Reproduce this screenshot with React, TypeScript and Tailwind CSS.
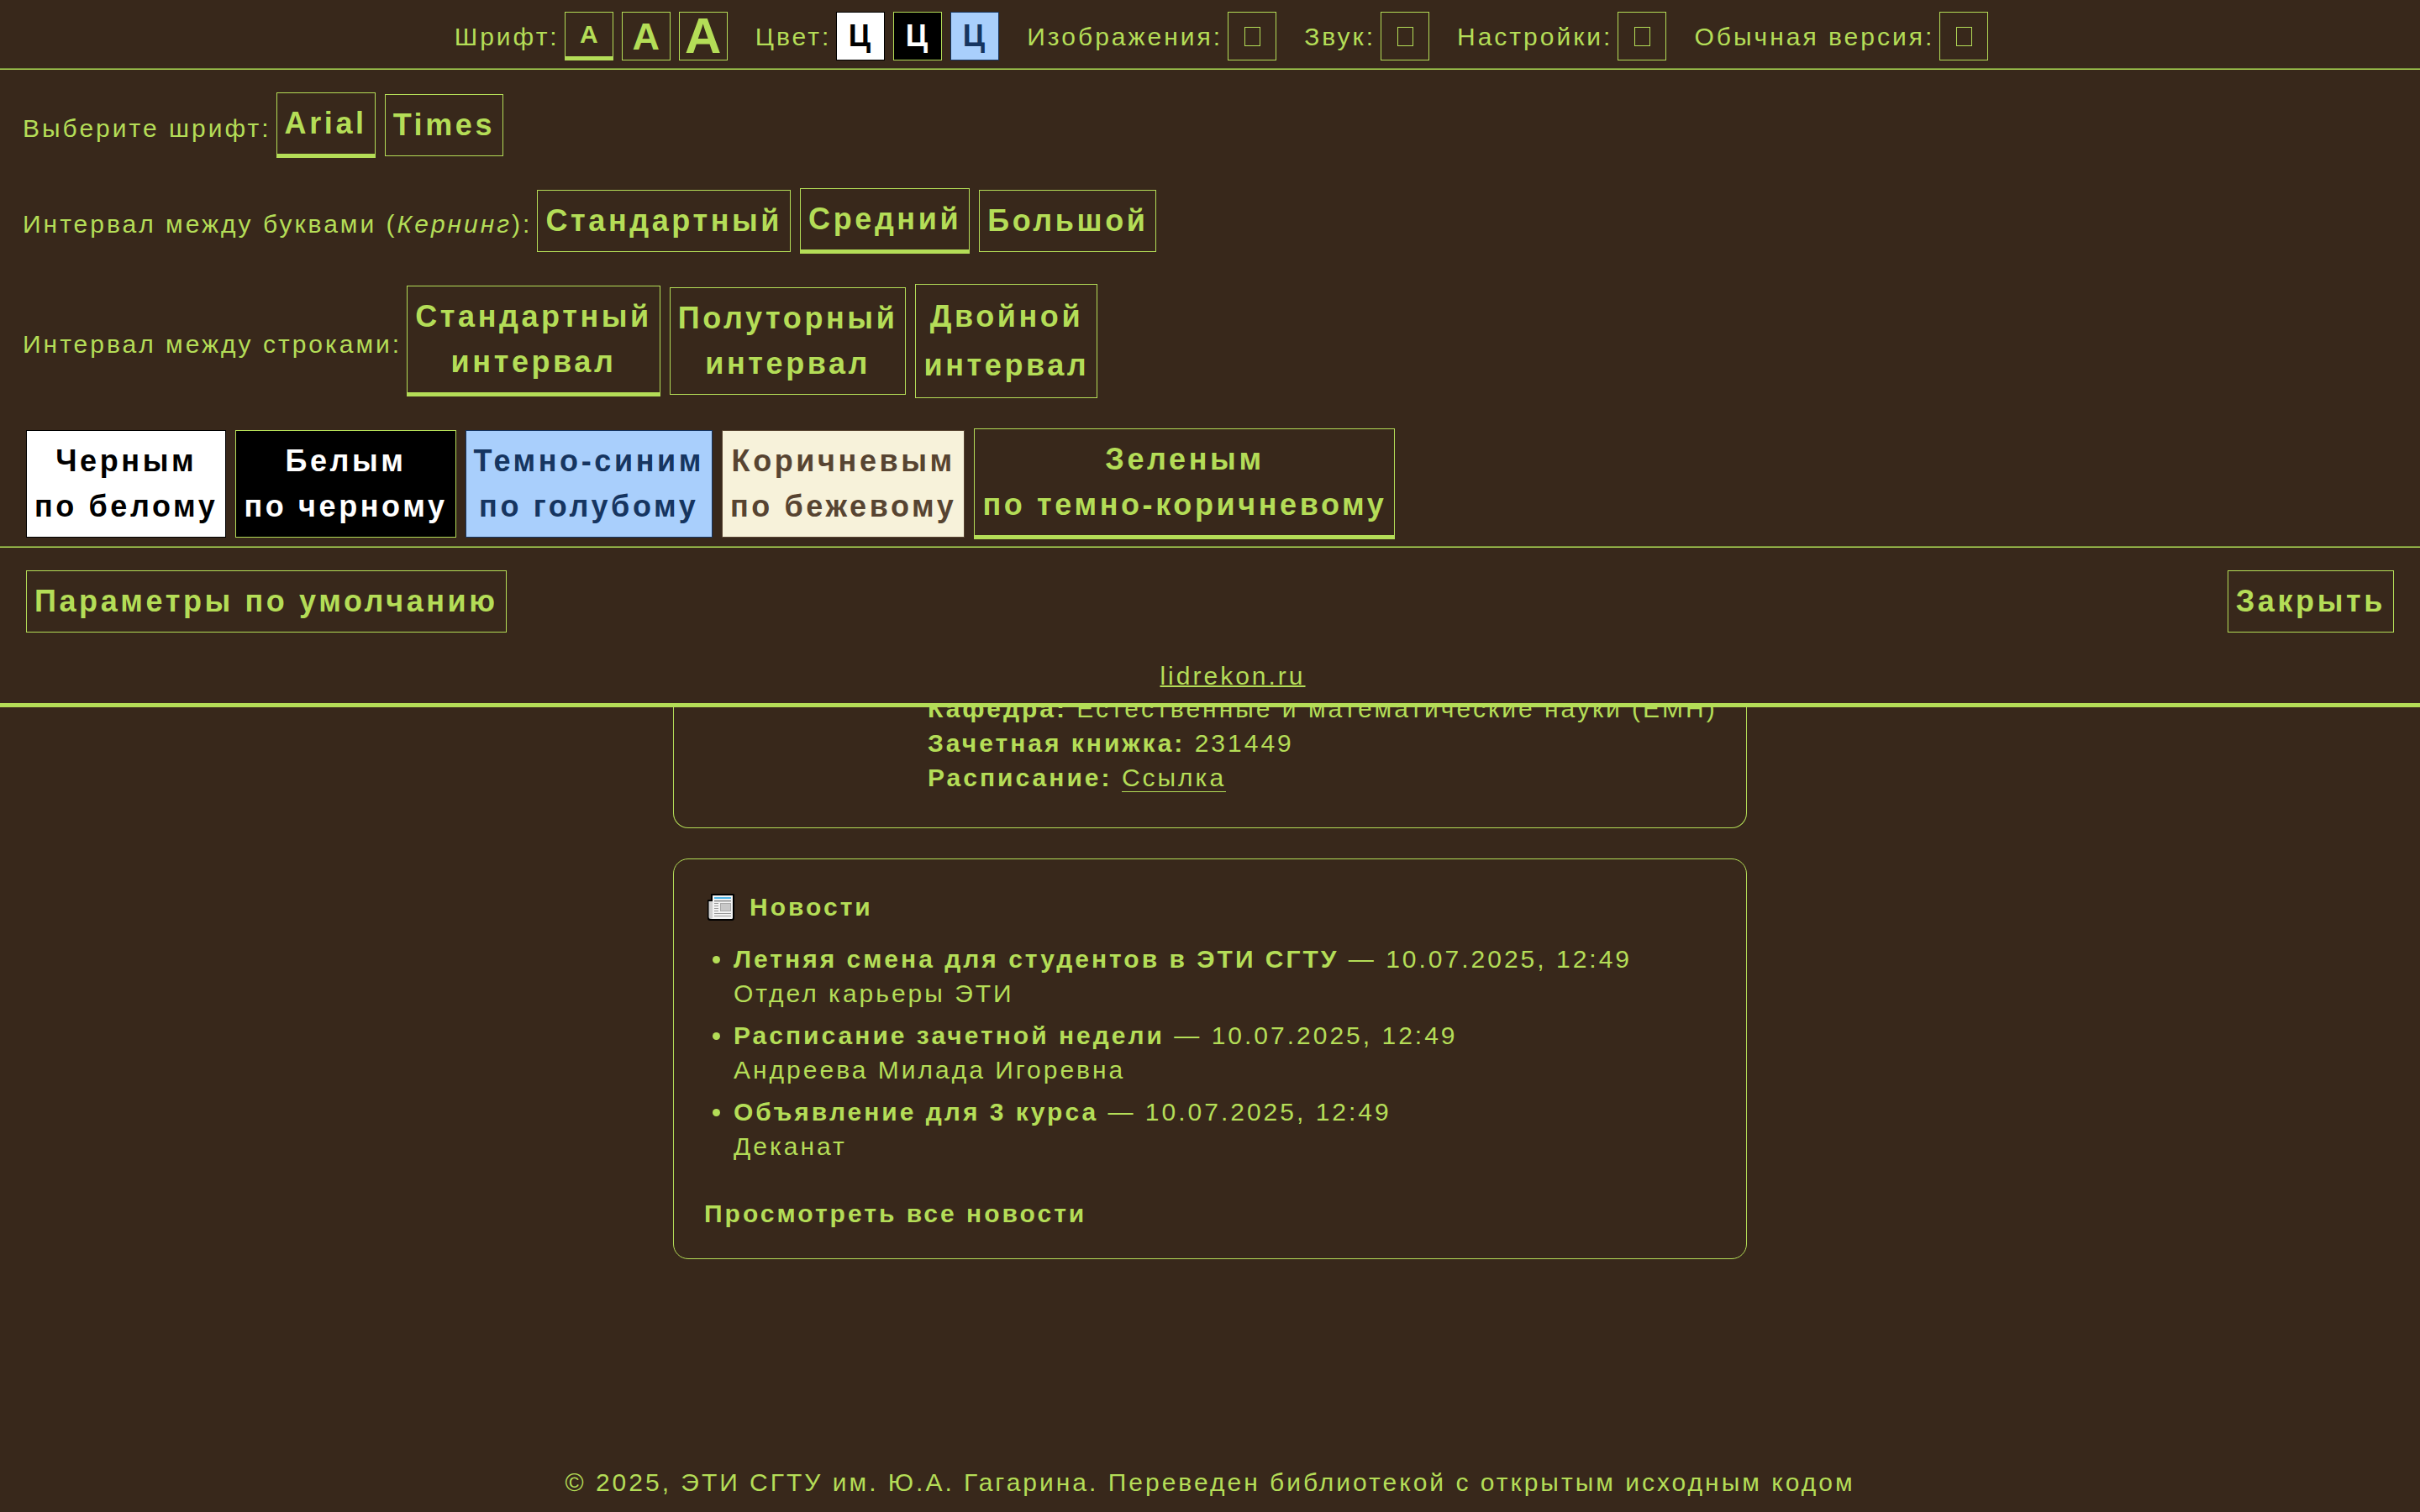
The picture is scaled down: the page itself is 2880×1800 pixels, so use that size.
import React from "react";

type Option = { label: string; lines: string[]; selected?: boolean; tone?: string };

const GREEN = "border-[#b4dd57] text-[#b4dd57]";

function OptionButton({ lines, selected, tone, wide }: { lines: string[]; selected?: boolean; tone?: string; wide?: boolean }) {
  return (
    <button
      type="button"
      aria-pressed={!!selected}
      className={`border p-[9px] text-center text-[36px] font-bold tracking-[0.1em] ${wide ? "leading-[58px]" : "leading-[54px]"} ${
        selected ? "border-b-[5px]" : ""
      } ${tone ?? GREEN}`}
    >
      {lines.map((line) => (
        <span key={line} className="block whitespace-nowrap">
          {line}
        </span>
      ))}
    </button>
  );
}

function OptionRow({ label, children }: { label?: React.ReactNode; children: React.ReactNode }) {
  return (
    <div role="group" className={`flex flex-wrap items-center gap-1.5 ${label ? "pl-[27px]" : "pl-[31px]"}`}>
      {label && <span className="pt-[6px]">{label}</span>}
      <div className="flex flex-wrap items-center gap-[11px]">{children}</div>
    </div>
  );
}

function Divider() {
  return <div role="separator" className="h-[2px] border-t border-b border-t-[#718a38] border-b-[#b4dd57]" />;
}

function BarGroup({ label, children }: { label: string; children: React.ReactNode }) {
  return (
    <div role="group" aria-label={label} className="flex items-center gap-1.5">
      <span>{label}</span>
      <div className="flex items-center gap-[10px]">{children}</div>
    </div>
  );
}

function SquareButton({ label, className, children }: { label: string; className: string; children: React.ReactNode }) {
  return (
    <button type="button" aria-label={label} className={`flex size-[58px] items-center justify-center border font-bold leading-none ${className}`}>
      {children}
    </button>
  );
}

function EmptyGlyph() {
  return <span className="h-[23px] w-[19px] border border-[#b4dd57]" />;
}

const themes: Option[] = [
  { label: "white", lines: ["Черным", "по белому"], tone: "border-black bg-white text-black" },
  { label: "black", lines: ["Белым", "по черному"], tone: "border-[#b4dd57] bg-black text-white" },
  { label: "blue", lines: ["Темно-синим", "по голубому"], tone: "border-[#163560] bg-[#a9cffc] text-[#163560]" },
  { label: "beige", lines: ["Коричневым", "по бежевому"], tone: "border-[#574431] bg-[#f7f2da] text-[#574431]" },
  { label: "brown", lines: ["Зеленым", "по темно-коричневому"], selected: true },
];

const news = [
  { title: "Летняя смена для студентов в ЭТИ СГТУ", date: "10.07.2025, 12:49", author: "Отдел карьеры ЭТИ" },
  { title: "Расписание зачетной недели", date: "10.07.2025, 12:49", author: "Андреева Милада Игоревна" },
  { title: "Объявление для 3 курса", date: "10.07.2025, 12:49", author: "Деканат" },
];

function Newspaper() {
  return (
    <svg viewBox="0 0 32 32" className="size-8" aria-hidden="true">
      <path d="M4 0h27a1 1 0 0 1 1 1v28a3 3 0 0 1-3 3H3a3 3 0 0 1-3-3V8a1 1 0 0 1 1-1h3z" fill="#000" />
      <path d="M1.5 9H6v21H4a2.500 2.500 0 0 1-2.500-2.500z" fill="#cfcfcf" />
      <path d="M6 2h24v26.500a1.500 1.500 0 0 1-1.500 1.500H4.500Q6 29.500 6 28z" fill="#f2f2f2" />
      <path d="M8 4h20v2H8z" fill="#4fb5e8" />
      <path d="M8 8h20v1.200H8z" fill="#757575" />
      <path d="M8 11.500h5M8 14.500h5M8 17.500h5M8 20.500h5M8 23.500h20M8 26.500h20" stroke="#9a9a9a" strokeWidth="1" />
      <path d="M15 11h13v10H15z" fill="#a8a8a8" />
      <path d="M16 12h11v8H16z" fill="#c8c8c8" />
    </svg>
  );
}

export default function App() {
  return (
    <div className="flex min-h-screen flex-col bg-[#38281b] font-['Liberation_Sans',Arial,sans-serif] text-[30px] leading-[41px] tracking-[0.1em] text-[#b4dd57]">
      <header className="sticky top-0 z-10 border-b-[5px] border-[#b4dd57] bg-[#38281b]">
        <div className="flex flex-wrap justify-center gap-x-[33px] pt-[14px] pb-[9px] pl-[27px]">
          <BarGroup label="Шрифт:">
            <SquareButton label="Обычный шрифт" className="border-b-[5px] border-[#b4dd57] text-[30px] tracking-normal">A</SquareButton>
            <SquareButton label="Средний шрифт" className="border-[#b4dd57] text-[45px] tracking-normal">A</SquareButton>
            <SquareButton label="Крупный шрифт" className="border-[#b4dd57] text-[60px] tracking-normal">A</SquareButton>
          </BarGroup>
          <BarGroup label="Цвет:">
            <SquareButton label="Черным по белому" className="border-black bg-white text-[36px] text-black">Ц</SquareButton>
            <SquareButton label="Белым по черному" className="border-[#b4dd57] bg-black text-[36px] text-white">Ц</SquareButton>
            <SquareButton label="Темно-синим по голубому" className="border-[#163560] bg-[#a9cffc] text-[36px] text-[#163560]">Ц</SquareButton>
          </BarGroup>
          {["Изображения:", "Звук:", "Настройки:", "Обычная версия:"].map((label) => (
            <BarGroup key={label} label={label}>
              <SquareButton label={label} className="border-[#b4dd57]">
                <EmptyGlyph />
              </SquareButton>
            </BarGroup>
          ))}
        </div>
        <Divider />
        <div className="flex flex-col gap-9 pt-[27px] pb-2">
          <OptionRow label="Выберите шрифт:">
            <OptionButton lines={["Arial"]} selected />
            <OptionButton lines={["Times"]} />
          </OptionRow>
          <OptionRow
            label={
              <>
                Интервал между буквами (<i>Кернинг</i>):
              </>
            }
          >
            <OptionButton lines={["Стандартный"]} />
            <OptionButton lines={["Средний"]} selected />
            <OptionButton lines={["Большой"]} />
          </OptionRow>
          <OptionRow label="Интервал между строками:">
            <OptionButton lines={["Стандартный", "интервал"]} selected />
            <OptionButton lines={["Полуторный", "интервал"]} />
            <OptionButton lines={["Двойной", "интервал"]} wide />
          </OptionRow>
          <OptionRow>
            {themes.map((t) => (
              <OptionButton key={t.label} lines={t.lines} selected={t.selected} tone={t.tone} />
            ))}
          </OptionRow>
        </div>
        <Divider />
        <div className="flex justify-between px-[31px] pt-[27px]">
          <OptionButton lines={["Параметры по умолчанию"]} />
          <OptionButton lines={["Закрыть"]} />
        </div>
        <div className="pt-[31px] pb-3 pl-[54px] text-center">
          <a href="https://lidrekon.ru" className="underline decoration-2">
            lidrekon.ru
          </a>
        </div>
      </header>

      <main className="mx-auto -mt-[19px] flex w-full max-w-[1278px] flex-col gap-9">
        <section className="rounded-b-[18px] border border-t-0 border-[#b4dd57] pr-9 pb-[39px] pl-[302px] whitespace-nowrap">
          <p>
            <b>Кафедра:</b> Естественные и математические науки (ЕМН)
          </p>
          <p>
            <b>Зачетная книжка:</b> 231449
          </p>
          <p>
            <b>Расписание:</b>{" "}
            <a href="#schedule" className="border-b border-[#b4dd57]">
              Ссылка
            </a>
          </p>
        </section>
        <section className="rounded-[18px] border border-[#b4dd57] px-9 pt-9 pb-[33px]">
          <h2 className="flex items-center gap-[18px] pl-1 font-bold">
            <Newspaper />
            Новости
          </h2>
          <ul className="mt-[21px] flex list-disc flex-col gap-[9px] pl-[35px]">
            {news.map((n) => (
              <li key={n.title}>
                <b>{n.title}</b> — {n.date}
                <br />
                {n.author}
              </li>
            ))}
          </ul>
          <a href="#news" className="mt-[39px] block font-bold">
            Просмотреть все новости
          </a>
        </section>
      </main>

      <footer className="mt-auto pb-[15px] text-center">
        © 2025, ЭТИ СГТУ им. Ю.А. Гагарина. Переведен библиотекой с открытым исходным кодом
      </footer>
    </div>
  );
}
